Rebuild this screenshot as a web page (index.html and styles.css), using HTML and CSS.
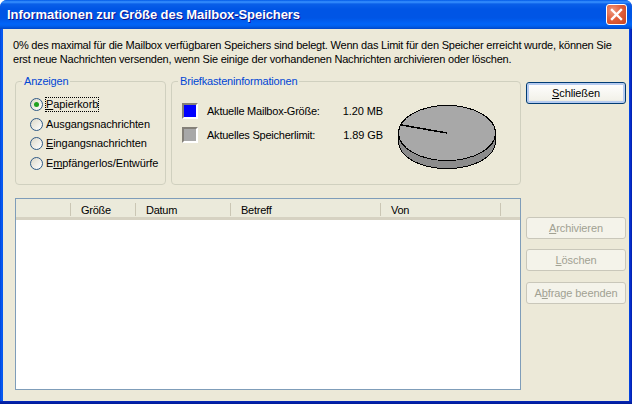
FILE: index.html
```html
<!DOCTYPE html>
<html lang="de">
<head>
<meta charset="utf-8">
<title>Informationen zur Größe des Mailbox-Speichers</title>
<link rel="stylesheet" href="styles.css">
</head>
<body>
<div class="window">
  <header class="titlebar">
    <span class="title">Informationen zur Größe des Mailbox-Speichers</span>
    <span class="close">
      <svg width="13" height="13" viewBox="0 0 13 13"><path d="M2 2 L11 11 M11 2 L2 11" stroke="#fff" stroke-width="2.4" stroke-linecap="square"/></svg>
    </span>
  </header>
  <main class="client">
    <p class="intro">0% des maximal für die Mailbox verfügbaren Speichers sind belegt. Wenn das Limit für den Speicher erreicht wurde, können Sie<br>erst neue Nachrichten versenden, wenn Sie einige der vorhandenen Nachrichten archivieren oder löschen.</p>
    <div class="body">
      <div class="left">
        <div class="groups">
          <fieldset class="group group-view">
            <legend>Anzeigen</legend>
            <label class="radio"><span class="dot checked"></span><span class="label focus"><u>P</u>apierkorb</span></label>
            <label class="radio"><span class="dot"></span><span class="label">Ausgangsnachrichten</span></label>
            <label class="radio"><span class="dot"></span><span class="label"><u>E</u>ingangsnachrichten</span></label>
            <label class="radio"><span class="dot"></span><span class="label">E<u>m</u>pfängerlos/Entwürfe</span></label>
          </fieldset>
          <fieldset class="group group-info">
            <legend>Briefkasteninformationen</legend>
            <div class="legend-list">
              <div class="stat"><span class="swatch blue"></span><span class="stat-name">Aktuelle Mailbox-Größe:</span><span class="stat-value">1.20 MB</span></div>
              <div class="stat"><span class="swatch gray"></span><span class="stat-name">Aktuelles Speicherlimit:</span><span class="stat-value">1.89 GB</span></div>
            </div>
            <svg class="pie" width="100" height="65" viewBox="0 0 100 65" shape-rendering="crispEdges">
              <path d="M0.5 28 V36 C0.5 52 22 63.500 49 63.500 S97.500 52 97.500 36 V28 Z" fill="#8c8c8c" stroke="#000"/>
              <ellipse cx="49" cy="28" rx="48.500" ry="27.500" fill="#a8a8a8" stroke="#000"/>
              <path d="M3.500 20 L49 28" stroke="#000" stroke-width="1.500" fill="none"/>
            </svg>
          </fieldset>
        </div>
        <div class="list">
          <div class="list-head">
            <span class="col col-0"></span>
            <span class="col col-1">Größe</span>
            <span class="col col-2">Datum</span>
            <span class="col col-3">Betreff</span>
            <span class="col col-4">Von</span>
            <span class="col-rest"></span>
          </div>
        </div>
      </div>
      <div class="actions">
        <button class="btn default" type="button"><u>S</u>chließen</button>
        <div class="actions-low">
          <button class="btn" type="button" disabled><u>A</u>rchivieren</button>
          <button class="btn" type="button" disabled><u>L</u>öschen</button>
          <button class="btn btn-last" type="button" disabled>A<u>b</u>frage beenden</button>
        </div>
      </div>
    </div>
  </main>
</div>
</body>
</html>
```
FILE: styles.css
```css
* { box-sizing: border-box; }
html, body { margin: 0; padding: 0; background: #fff; }
body { width: 632px; height: 404px; overflow: hidden; font: 11px/13px "Liberation Sans", Arial, sans-serif; color: #000; letter-spacing: -0.1px; }
.window {
  width: 632px; height: 404px; display: flex; flex-direction: column;
  border-radius: 7px 7px 0 0; overflow: hidden;
  background:
    linear-gradient(180deg, transparent 401px, #0628b8 401px, #001a96 404px),
    linear-gradient(90deg, #0046d8 0, #0a5cf8 2px, #0055e5 3px, #0055e5 629px, #0831d9 630px, #0020a8 632px);
}
.titlebar {
  height: 29px; flex: none; display: flex; align-items: center; justify-content: space-between;
  padding: 0 5px 0 7px;
  background: linear-gradient(180deg, #0058e6 0, #3a93ff 2px, #0a5fe8 4px, #0055e5 9px, #0055e5 18px, #0064f8 24px, #0060ee 26px, #0047c8 29px);
}
.title { font: bold 13px/16px "Liberation Sans", Arial, sans-serif; letter-spacing: -0.07px; color: #fff; text-shadow: 1px 1px 0 #0f1089; padding-top: 1px; }
.close {
  width: 21px; height: 21px; display: flex; align-items: center; justify-content: center;
  border: 1px solid #fff; border-radius: 3px;
  background: radial-gradient(circle at 30% 30%, #ee9a80 0, #e2603c 45%, #c8431f 100%);
}
.client {
  flex: 1; min-height: 0; margin: 0 3px 3px 3px; background: #ece9d8;
  padding: 9px 0 0 10px; display: flex; flex-direction: column;
}
.intro { margin: 0; padding: 0; height: 37px; line-height: 14px; white-space: nowrap; letter-spacing: -0.21px; }
.body { display: flex; flex: 1; min-height: 0; gap: 5px; margin-left: 2px; }
.left { width: 506px; display: flex; flex-direction: column; }
.groups { display: flex; gap: 5px; height: 112px; }
.group {
  margin: 0; padding: 0; min-width: 0; height: 110px;
  border: 1px solid #d0d0bf; border-radius: 4px;
}
.group legend { color: #0046d5; padding: 0 2px; line-height: 13px; letter-spacing: -0.18px; }
.group-view { width: 151px; padding: 10px 0 0 14px; }
.group-view legend { margin-left: -8px; }
.group-info { width: 350px; padding: 11px 0 0 10px; display: flex; }
.group-info legend { margin-left: -4px; }
.radio { display: flex; align-items: center; height: 13px; margin-bottom: 6.500px; }
.dot {
  width: 13px; height: 13px; flex: none; border-radius: 50%; margin-right: 3px;
  border: 1px solid #2f5a86; background: linear-gradient(135deg, #dcd8c8, #fff);
  display: flex; align-items: center; justify-content: center;
}
.dot.checked::after { content: ""; width: 5px; height: 5px; border-radius: 50%; background: #21a121; }
.label { white-space: nowrap; }
.label.focus { outline: 1px dotted #000; }
.legend-list { width: 201px; }
.stat { display: flex; align-items: center; height: 24px; }
.swatch {
  width: 16px; height: 16px; flex: none; margin-right: 9px;
  border: 2px solid; border-color: #848078 #fff #fff #848078;
}
.swatch.blue { background: #0000ff; }
.swatch.gray { background: #a8a8a8; }
.stat-name { flex: 1; white-space: nowrap; letter-spacing: -0.23px; }
.stat-value { white-space: nowrap; }
.pie { margin-left: 15px; margin-top: 6px; flex: none; }
.list {
  width: 506px; height: 192px; flex: none; margin-top: 11px;
  border: 1px solid #7f9db9; background: #fff;
}
.list-head { display: flex; height: 21px; background: #ebeadb; border-bottom: 3px solid #d6d2c2; padding: 0 1px; }
.col { padding-left: 10px; height: 13px; border-right: 1px solid #cac6b4; margin-top: 4px; line-height: 14px; letter-spacing: -0.25px; }
.col-0 { width: 54px; }
.col-1 { width: 65px; }
.col-2 { width: 95px; }
.col-3 { width: 150px; }
.col-4 { width: 120px; }
.col-rest { flex: 1; }
.actions { width: 100px; display: flex; flex-direction: column; padding-top: 7px; }
.btn {
  width: 100px; height: 22px; padding: 0; font: 11px/13px "Liberation Sans", Arial, sans-serif; letter-spacing: -0.1px; color: #000;
  border: 1px solid #003c74; border-radius: 3px;
  background: linear-gradient(180deg, #fff, #f2f1e9 85%, #d9d6c9);
}
.btn.default { box-shadow: inset 0 0 0 2px #b6cbf0; }
.btn:disabled { color: #a1a192; background: #f4f3ea; border-color: #c9c7ba; }
.btn-last { margin-top: 1px; }
.actions-low { display: flex; flex-direction: column; gap: 10px; margin-top: 113px; }
```
